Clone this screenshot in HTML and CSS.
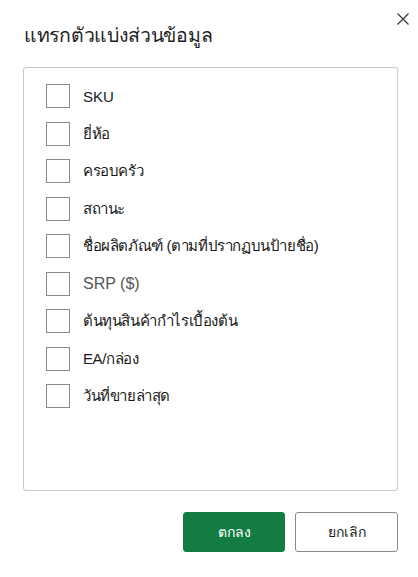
FILE: index.html
```html
<!DOCTYPE html>
<html lang="th">
<head>
<meta charset="utf-8">
<title>แทรกตัวแบ่งส่วนข้อมูล</title>
<link rel="stylesheet" href="styles.css">
</head>
<body>
<div class="dialog">
  <div class="header">
    <h1 class="title">แทรกตัวแบ่งส่วนข้อมูล</h1>
    <button class="close" aria-label="ปิด">
      <svg width="12" height="12" viewBox="0 0 12 12"><path d="M0.5 0.5 L11.5 11.5 M11.5 0.5 L0.5 11.5" stroke="#3a3a3a" stroke-width="1.3" fill="none"/></svg>
    </button>
  </div>
  <div class="list">
    <label class="row"><span class="box"></span><span class="label">SKU</span></label>
    <label class="row"><span class="box"></span><span class="label thai">ยี่ห้อ</span></label>
    <label class="row"><span class="box"></span><span class="label thai">ครอบครัว</span></label>
    <label class="row"><span class="box"></span><span class="label thai">สถานะ</span></label>
    <label class="row"><span class="box"></span><span class="label thai">ชื่อผลิตภัณฑ์ (ตามที่ปรากฏบนป้ายชื่อ)</span></label>
    <label class="row"><span class="box"></span><span class="label light">SRP ($)</span></label>
    <label class="row"><span class="box"></span><span class="label thai">ต้นทุนสินค้ากำไรเบื้องต้น</span></label>
    <label class="row"><span class="box"></span><span class="label thai">EA/กล่อง</span></label>
    <label class="row"><span class="box"></span><span class="label thai">วันที่ขายล่าสุด</span></label>
  </div>
  <div class="footer">
    <button class="btn primary">ตกลง</button>
    <button class="btn secondary">ยกเลิก</button>
  </div>
</div>
</body>
</html>
```
FILE: styles.css
```css
html, body {
  margin: 0;
  padding: 0;
  background: #ffffff;
}
body {
  font-family: "Liberation Sans", "Noto Sans", sans-serif;
  color: #242424;
}
.dialog {
  width: 418px;
  height: 577px;
  display: flex;
  flex-direction: column;
  position: relative;
}
.header {
  height: 67px;
  display: flex;
  align-items: flex-start;
}
.title {
  margin: 21px 0 0 24px;
  font-size: 19.5px;
  line-height: 28px;
  font-weight: normal;
  letter-spacing: -0.3px;
  color: #1f1f1f;
}
.close {
  position: absolute;
  top: 13px;
  right: 9px;
  width: 12px;
  height: 12px;
  padding: 0;
  border: none;
  background: none;
  display: flex;
}
.list {
  margin: 0 20px 0 23px;
  height: 424px;
  box-sizing: border-box;
  border: 1px solid #c8c8c8;
  border-radius: 3px;
  padding: 16px 22px;
  display: flex;
  flex-direction: column;
  gap: 13.5px;
}
.row {
  display: flex;
  align-items: center;
  height: 24px;
}
.box {
  width: 24px;
  height: 24px;
  box-sizing: border-box;
  border: 1.5px solid #8a8a8a;
  flex: none;
}
.label {
  margin-left: 13px;
  font-size: 15px;
  color: #1a1a1a;
}
.label.thai {
  letter-spacing: -0.4px;
}
.label.light {
  color: #555555;
  font-size: 16px;
}
.footer {
  display: flex;
  justify-content: flex-end;
  gap: 10px;
  margin: 21px 20px 0 0;
}
.btn {
  width: 102px;
  height: 40px;
  box-sizing: border-box;
  border-radius: 3px;
  font-family: inherit;
  font-size: 14px;
}
.primary {
  background: #137c43;
  border: 1px solid #137c43;
  color: #ffffff;
}
.secondary {
  width: 103px;
  background: #ffffff;
  border: 1px solid #8a8a8a;
  color: #1a1a1a;
}
```
